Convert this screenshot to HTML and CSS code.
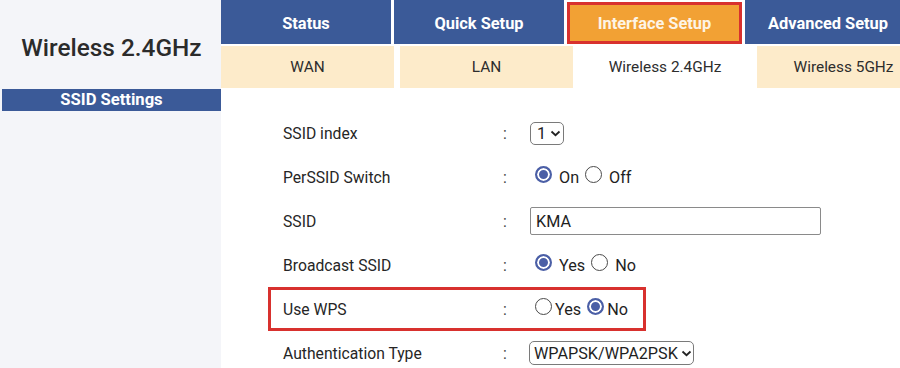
FILE: index.html
```html
<!DOCTYPE html>
<html lang="en">
  <head>
    <meta charset="UTF-8" />
    <meta name="viewport" content="width=device-width, initial-scale=1.0" />
    <title>Wireless 2.4GHz</title>
    <link rel="stylesheet" href="styles.css">
  </head>
  <body>
    <div class="page">
      <!--
        Side panel
      -->
      <aside class="side">
        <h1 class="side-title">Wireless 2.4GHz</h1>
        <div class="side-bar">SSID Settings</div>
      </aside>

      <main class="content">
        <!--
          Navigation
        -->
        <nav class="tabs">
          <a class="tab tab-status">Status</a>
          <a class="tab tab-quick">Quick Setup</a>
          <a class="tab tab-iface active">Interface Setup</a>
          <a class="tab tab-adv">Advanced Setup</a>
        </nav>
        <nav class="subtabs">
          <a class="subtab sub-wan">WAN</a>
          <a class="subtab sub-lan">LAN</a>
          <a class="subtab sub-24 active">Wireless 2.4GHz</a>
          <a class="subtab sub-5">Wireless 5GHz</a>
        </nav>

        <!--
          SSID settings form
        -->
        <form class="form">
          <div class="row">
            <label>SSID index</label>
            <span class="colon">:</span>
            <div class="control">
              <span class="select sel-index">1
                <svg class="chev" width="11" height="7" viewBox="0 0 11 7"><path d="M1.5 1.5 5.5 5.2l4-3.7" fill="none" stroke="#222" stroke-width="1.8"/></svg>
              </span>
            </div>
          </div>
          <div class="row">
            <label>PerSSID Switch</label>
            <span class="colon">:</span>
            <div class="control radios">
              <span class="radio checked"></span><span class="opt">On</span>
              <span class="radio"></span><span class="opt">Off</span>
            </div>
          </div>
          <div class="row">
            <label>SSID</label>
            <span class="colon">:</span>
            <div class="control">
              <input class="text" type="text" value="KMA" />
            </div>
          </div>
          <div class="row">
            <label>Broadcast SSID</label>
            <span class="colon">:</span>
            <div class="control radios">
              <span class="radio checked"></span><span class="opt">Yes</span>
              <span class="radio"></span><span class="opt">No</span>
            </div>
          </div>
          <div class="row marked">
            <label>Use WPS</label>
            <span class="colon">:</span>
            <div class="control radios">
              <span class="radio"></span><span class="opt tight">Yes</span>
              <span class="radio checked"></span><span class="opt tight">No</span>
            </div>
          </div>
          <div class="row">
            <label>Authentication Type</label>
            <span class="colon">:</span>
            <div class="control">
              <span class="select sel-auth">WPAPSK/WPA2PSK
                <svg class="chev" width="11" height="7" viewBox="0 0 11 7"><path d="M1.5 1.5 5.5 5.2l4-3.7" fill="none" stroke="#222" stroke-width="1.8"/></svg>
              </span>
            </div>
          </div>
        </form>
      </main>
    </div>
  </body>
</html>
```

FILE: styles.css
```css
/*
  Global styles
*/

:root {
  --blue: #3b5a98;
  --orange: #f2a134;
  --red: #d8312e;
  --beige: #fdebca;
  --side-bg: #f4f5f9;
  --text: #262626;
}
* {
  margin: 0;
  padding: 0;
  box-sizing: border-box;
  font-family: Roboto, "Liberation Sans", sans-serif;
}
body {
  width: 900px;
  height: 368px;
  overflow: hidden;
  background-color: white;
  color: var(--text);
}
.page {
  display: grid;
  grid-template-columns: 221px 1fr;
  height: 368px;
}

/*
  Side panel
*/

.side {
  background-color: var(--side-bg);
  padding-left: 2px;
}
.side-title {
  height: 89px;
  display: flex;
  align-items: center;
  justify-content: center;
  padding: 6px 0 0 0;
  font-size: 24.4px;
  font-weight: 500;
  color: #2b2b2b;
}
.side-bar {
  height: 22px;
  line-height: 22px;
  text-align: center;
  color: white;
  font-size: 16.6px;
  font-weight: 700;
  background-color: var(--blue);
}

/*
  Navigation
*/

.content {
  overflow: hidden;
}
.tabs {
  display: flex;
  gap: 3px;
  height: 44px;
}
.tab {
  display: flex;
  align-items: center;
  justify-content: center;
  flex-shrink: 0;
  padding-top: 2px;
  color: white;
  font-size: 16.4px;
  font-weight: 700;
  background-color: var(--blue);
}
.tab-status { width: 170px; }
.tab-quick { width: 170px; }
.tab-iface { width: 175px; }
.tab-adv { width: 166px; }
.tab.active {
  margin-top: 2px;
  padding-top: 0;
  background-color: var(--orange);
  border: 3px solid var(--red);
  color: #fdf4e6;
}
.subtabs {
  display: flex;
  height: 42px;
  margin-top: 2px;
}
.subtab {
  display: flex;
  align-items: center;
  justify-content: center;
  flex-shrink: 0;
  font-size: 15.4px;
  color: #2d2d2d;
  background-color: var(--beige);
}
.sub-wan { width: 173px; }
.sub-lan { width: 173px; margin-left: 6px; }
.sub-24 { width: 184px; }
.sub-5 { width: 173px; }
.subtab.active {
  background-color: white;
}

/*
  Form
*/

.form {
  padding: 23px 0 0 62px;
}
.row {
  display: grid;
  grid-template-columns: 220px 27px 1fr;
  align-items: center;
  height: 44px;
  font-size: 15.7px;
}
.row.marked {
  width: 378px;
  margin-left: -15px;
  padding-left: 12px;
  border: 3px solid var(--red);
}
.colon {
  color: #444;
}
.control {
  display: flex;
  align-items: center;
}
.select {
  display: inline-flex;
  align-items: center;
  gap: 4px;
  height: 24px;
  padding: 0 3px 0 4px;
  border: 1px solid #7a7a7a;
  border-radius: 5px;
  font-size: 16.2px;
  color: #1f1f1f;
  background-color: white;
  white-space: nowrap;
}
.chev {
  flex-shrink: 0;
}
.sel-index {
  width: 34px;
  height: 23px;
  padding-left: 6px;
}
.sel-auth {
  width: 165px;
  gap: 3px;
  margin-left: -1px;
}
.text {
  width: 291px;
  height: 28px;
  padding: 0 5px;
  border: 1px solid #8a8a8a;
  border-radius: 2px;
  font-size: 16.2px;
  color: #1f1f1f;
  outline: none;
}
.radios {
  padding-left: 5px;
}
.radio {
  flex-shrink: 0;
  width: 17px;
  height: 17px;
  border-radius: 50%;
  border: 1px solid #4a4a4a;
  background-color: white;
  margin-top: -6px;
}
.radio.checked {
  border: 2px solid #4b5fa6;
  background-color: #4b5fa6;
  box-shadow: inset 0 0 0 2px white;
}
.opt {
  margin: 0 6px 0 7px;
  font-size: 16.2px;
  color: #1f1f1f;
}
.opt.tight {
  margin-left: 3px;
}
```
